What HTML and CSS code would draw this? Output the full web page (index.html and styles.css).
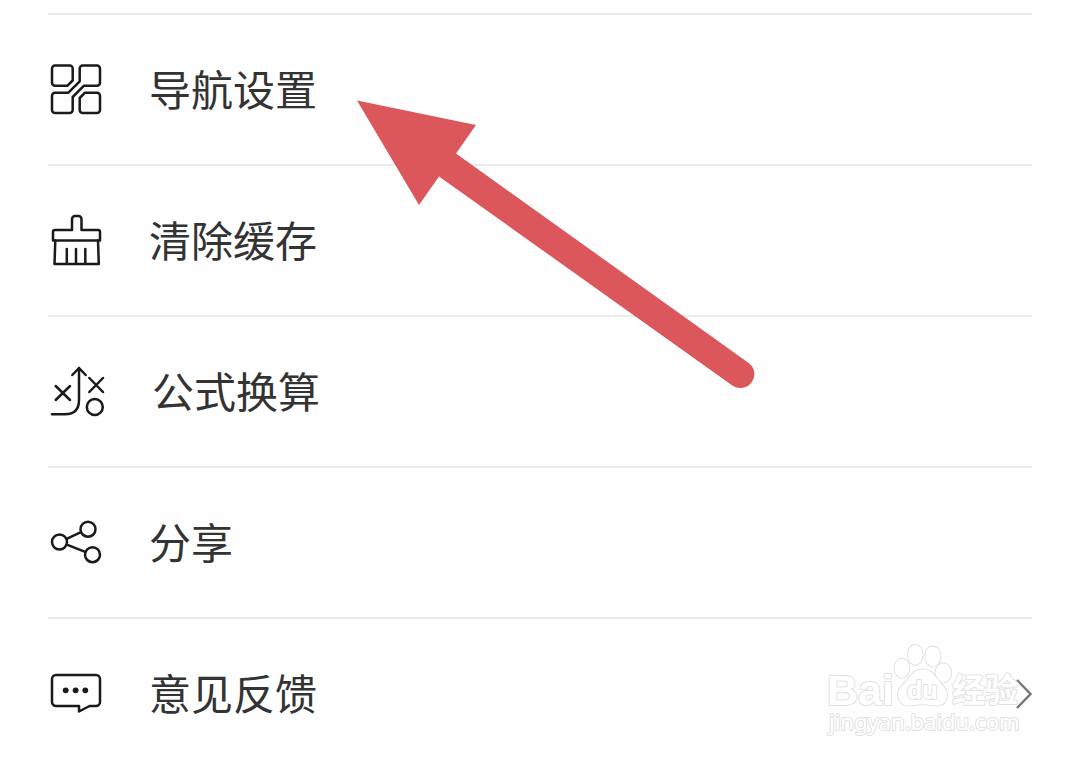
FILE: index.html
```html
<!DOCTYPE html>
<html lang="zh-CN">
<head>
  <meta charset="UTF-8">
  <meta name="viewport" content="width=device-width, initial-scale=1">
  <title>设置</title>
  <link rel="stylesheet" href="styles.css">
</head>
<body>
  <main class="page">
    <nav class="menu">
      <a class="row" href="#nav">
        <svg class="icon" viewBox="0 0 57 57" aria-hidden="true">
          <path d="M7 4.5H21.7a3 3 0 0 1 3 3V19.5L19.5 24.7H7a3 3 0 0 1-3-3V7.500a3 3 0 0 1 3-3z"/>
          <path d="M34.7 4.5H49a3 3 0 0 1 3 3V21.700a3 3 0 0 1-3 3H36L24.7 36V49a3 3 0 0 1-3 3H7a3 3 0 0 1-3-3V34.700a3 3 0 0 1 3-3H20.400L31.7 20.400V7.500a3 3 0 0 1 3-3z"/>
          <path d="M37 31.7H49a3 3 0 0 1 3 3V49a3 3 0 0 1-3 3H34.700a3 3 0 0 1-3-3V37z"/>
        </svg>
        <span class="label">导航设置</span>
      </a>
      <a class="row" href="#cache">
        <svg class="icon" viewBox="0 0 57 57" aria-hidden="true">
          <path d="M24 18V7a3 3 0 0 1 3-3h3.500a3 3 0 0 1 3 3V18H50a2 2 0 0 1 2 2v8.500H5V20a2 2 0 0 1 2-2z"/>
          <path d="M7.300 28.500L6.500 52H50.800L50 28.500M18.800 37V52M28 37V52M37.300 37V52"/>
        </svg>
        <span class="label">清除缓存</span>
      </a>
      <a class="row" href="#formula">
        <svg class="icon icon-wide" viewBox="0 0 60 57" aria-hidden="true">
          <path d="M24.3 12L31 5L37.7 12M31 5V37Q31 51.300 17 51.300H4"/>
          <path d="M7.700 23L22 37M22 23L7.700 37M41.300 15L55 29M55 15L41.300 29"/>
          <circle cx="46.800" cy="44" r="8"/>
        </svg>
        <span class="label">公式换算</span>
      </a>
      <a class="row" href="#share">
        <svg class="icon" viewBox="0 0 57 57" aria-hidden="true">
          <circle cx="11.500" cy="28" r="7.500"/>
          <circle cx="40" cy="15.200" r="7.500"/>
          <circle cx="44.500" cy="40.700" r="7.500"/>
          <path d="M18.600 24.800L33 18.200M18.800 30.600L37.200 37.800"/>
        </svg>
        <span class="label">分享</span>
      </a>
      <a class="row" href="#feedback">
        <svg class="icon" viewBox="0 0 57 57" aria-hidden="true">
          <path d="M8 10H48a4 4 0 0 1 4 4V37a4 4 0 0 1-4 4H41.500L31 46.500V41H8a4 4 0 0 1-4-4V14a4 4 0 0 1 4-4z"/>
          <g class="dots">
            <circle cx="17.700" cy="25.300" r="2.900"/>
            <circle cx="27.600" cy="25.300" r="2.900"/>
            <circle cx="37.300" cy="25.300" r="2.900"/>
          </g>
        </svg>
        <span class="label">意见反馈</span>
        <svg class="chevron" viewBox="0 0 17 32" aria-hidden="true">
          <path d="M2 2L15.500 16L2 30"/>
        </svg>
      </a>
    </nav>

    <!-- red pointer -->
    <svg class="pointer" viewBox="0 0 400 290" aria-hidden="true">
      <path d="M0 0.500L119 25L99 53.500L392 263.200A13.900 13.900 0 0 1 375.700 285.700L82 76.500L62 105z"/>
    </svg>

    <!-- watermark -->
    <svg class="watermark" viewBox="0 0 200 100">
      <text class="brand" x="1" y="65">Bai</text>
      <ellipse cx="76" cy="28.300" rx="7.300" ry="9.500"/>
      <ellipse cx="89.300" cy="14.800" rx="7.300" ry="10"/>
      <ellipse cx="106.800" cy="16.400" rx="7.600" ry="10"/>
      <ellipse cx="117.300" cy="32.800" rx="7.800" ry="9.600"/>
      <path d="M96.700 29.500C87 29.500 84 38 78.500 43C72 49 70 55 74 61C77 66 82 66 88 65Q96.700 63.500 105 65C112 66 117 66 120 60C123 53 119 48 114.500 43C109 37 106.500 29.500 96.700 29.500z"/>
      <text class="du" x="81" y="59">du</text>
      <text class="cn" x="126" y="62">经验</text>
      <text class="url" x="3" y="90">jingyan.baidu.com</text>
    </svg>
  </main>
</body>
</html>
```
FILE: styles.css
```css
body {
  margin: 0;
  background-color: #fefefe;
  color: #333;
  font-family: "Noto Sans CJK SC", sans-serif;
}

.page {
  position: relative;
  padding-top: 13px;
}

.menu {
  margin: 0 48px;
}

.row {
  display: flex;
  align-items: center;
  gap: 44px;
  padding: 46px 0;
  border-top: 2px solid #ebebeb;
  color: inherit;
  text-decoration: none;
}

.row:last-child {
  padding-bottom: 32px;
}

.icon {
  flex: none;
  width: 57px;
  height: 57px;
  fill: none;
  stroke: #1a1a1a;
  stroke-width: 2.5;
  stroke-linecap: round;
  stroke-linejoin: round;
}

.icon-wide {
  width: 60px;
}

.dots {
  fill: #1a1a1a;
  stroke: none;
}

.label {
  flex: 1;
  padding-bottom: 3px;
  font-size: 42px;
  line-height: 54px;
}

.chevron {
  width: 17px;
  height: 32px;
  fill: none;
  stroke: #777;
  stroke-width: 2.5;
}

.pointer {
  position: absolute;
  top: 100px;
  left: 357px;
  width: 400px;
  height: 290px;
  fill: #db575b;
}

.watermark {
  position: absolute;
  top: 640px;
  right: 54px;
  width: 200px;
  height: 100px;
  fill: #fff;
  stroke: #e2e2e2;
  stroke-width: 2;
  stroke-linejoin: round;
  paint-order: stroke;
  pointer-events: none;
}

.brand {
  font: bold 43px "Liberation Sans", sans-serif;
}

.du {
  font: bold 25px "Liberation Sans", sans-serif;
}

.cn {
  font: bold 33px "Noto Sans CJK SC", sans-serif;
}

.url {
  font: 22px "Noto Sans", sans-serif;
}
```
